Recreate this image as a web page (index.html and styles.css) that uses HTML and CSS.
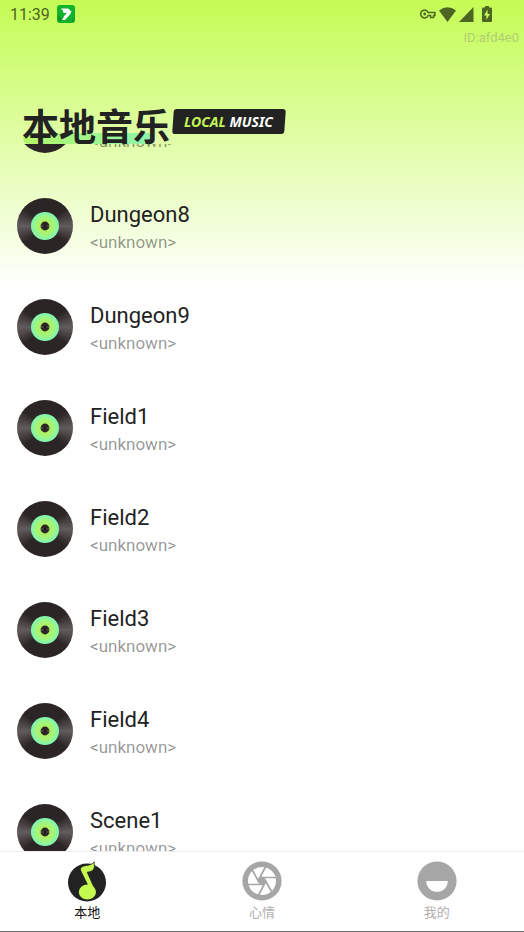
FILE: index.html
```html
<!DOCTYPE html>
<html lang="zh-CN">
    <head>
        <meta charset="UTF-8" />
        <meta name="viewport" content="width=device-width, initial-scale=1.0" />
        <title>本地音乐</title>
        <link rel="stylesheet" href="styles.css">
    </head>
    <body>
        <!-- shared shapes -->
        <svg class="defs" width="0" height="0" aria-hidden="true">
            <defs>
                <radialGradient id="label-fill">
                    <stop offset="0.2" stop-color="#b5f052" />
                    <stop offset="0.65" stop-color="#a2f57e" />
                    <stop offset="1" stop-color="#7df5b4" />
                </radialGradient>
                <symbol id="hole" viewBox="0 0 10 10">
                    <circle cx="5" cy="5" r="4.4" fill="#2c2526" />
                    <path d="M5 5 0.9 4V6ZM5 5 9.1 4V6Z" fill="#5a5253" />
                    <circle cx="5" cy="5" r="1" fill="#1d1718" />
                </symbol>
            </defs>
        </svg>

        <div class="status-bar">
            <span class="time">11:39</span>
            <svg class="app-icon" width="18" height="18" viewBox="0 0 18 18" aria-hidden="true">
                <rect width="18" height="18" rx="3" fill="#12b32c" />
                <path d="M1 10 5 14 3 17H15L17 12V16Q17 17 15 17H3Q1 17 1 15Z" fill="#0c9424" />
                <path d="M4 3.5H11L14.5 6.5 13 9.5 8 15H5L7.5 10.5 10 8H6.5L6 6Z" fill="#fff" />
            </svg>
            <div class="status-icons">
                <svg width="16" height="10" viewBox="0 0 16 10" aria-hidden="true">
                    <path d="M8.2 3.5A3.9 3.9 0 1 0 8.2 6.5H10.6V8.6H13.6V6.5H14.9V3.5Z" fill="none" stroke="#4c6522" stroke-width="1.5" />
                    <circle cx="4.7" cy="5" r="1.4" fill="#4c6522" />
                </svg>
                <svg width="17" height="15" viewBox="0 0 17 15" aria-hidden="true">
                    <path d="M0 3.5Q8.5-2.8 17 3.5L8.5 15Z" fill="#4c6522" />
                </svg>
                <svg width="15" height="15" viewBox="0 0 15 15" aria-hidden="true">
                    <path d="M14.5 0V15H0Z" fill="#4c6522" />
                </svg>
                <svg class="battery" width="10" height="16" viewBox="0 0 10 16" aria-hidden="true">
                    <path fill-rule="evenodd" d="M3 0H7V1.6H9Q10 1.6 10 2.6V15Q10 16 9 16H1Q0 16 0 15V2.6Q0 1.6 1 1.6H3ZM5.6 3.6 2 9.4H4.4V13.8L8 8H5.6Z" fill="#4c6522" />
                </svg>
            </div>
        </div>

        <header>
            <div class="device-id">ID:afd4e0</div>
            <div class="heading">
                <h1>本地音乐</h1>
                <div class="badge"><span>LOCAL</span> MUSIC</div>
            </div>
        </header>

        <main id="songs">
            <ul class="song-list" id="songList"></ul>
        </main>

        <nav>
            <a href="#local" class="active">
                <svg width="40" height="42" viewBox="0 0 40 42" aria-hidden="true">
                    <circle cx="20" cy="22.5" r="19" fill="#222" />
                    <path d="M25.2 3.8 27.2 1.8 27.4 7.3Q26.8 11.3 22.6 11.8L20.2 12.2 28.6 31 23.6 31 13.4 10.1Q12.4 7.1 17 5.9Q23.4 5 25.2 3.8Z" fill="#c5fb50" stroke="#222" stroke-width="0.8" />
                    <ellipse cx="20.4" cy="32" rx="8.6" ry="7.6" fill="#c5fb50" />
                </svg>
                <span>本地</span>
            </a>
            <a href="#mood">
                <svg width="40" height="42" viewBox="0 0 40 42" aria-hidden="true">
                    <circle cx="20" cy="21" r="19.6" fill="#a6a6a6" />
                    <circle cx="20" cy="21" r="14" fill="#fff" />
                    <path d="M10.5 10.5 17.5 23M24 6 16 21M34 17.5H18M29.5 31.5 22.5 19M16 36 24 21M6 24.5H22" fill="none" stroke="#a6a6a6" stroke-width="1.7" />
                    <path d="M18 17.5H22L24 21 22 24.5H18L16 21Z" fill="#a6a6a6" />
                </svg>
                <span>心情</span>
            </a>
            <a href="#mine">
                <svg width="40" height="42" viewBox="0 0 40 42" aria-hidden="true">
                    <circle cx="20" cy="21" r="19.6" fill="#a6a6a6" />
                    <path d="M9.2 21H30.8A10.8 10.8 0 0 1 9.2 21Z" fill="#fff" />
                </svg>
                <span>我的</span>
            </a>
        </nav>

        <script>
            const songs = [
                "Dungeon7",
                "Dungeon8",
                "Dungeon9",
                "Field1",
                "Field2",
                "Field3",
                "Field4",
                "Scene1",
            ];

            const songList = document.getElementById("songList");
            songs.forEach((name) => {
                const song = document.createElement("li");
                song.innerHTML = `
                    <div class="disc">
                        <svg width="28" height="28" viewBox="0 0 28 28" aria-hidden="true">
                            <circle cx="14" cy="14" r="14" fill="url(#label-fill)" />
                            <use href="#hole" x="9" y="9" width="10" height="10" />
                        </svg>
                    </div>
                    <div class="info">
                        <div class="name">${name}</div>
                        <div class="artist">&lt;unknown&gt;</div>
                    </div>`;
                songList.appendChild(song);
            });

            document.getElementById("songs").scrollTop = 70;
        </script>
    </body>
</html>
```

FILE: styles.css
```css
* {
    box-sizing: border-box;
}

body,
html {
    margin: 0;
    padding: 0;
    height: 100%;
    overflow: hidden;
    font-family: Roboto, "Noto Sans CJK SC", sans-serif;
}

body {
    display: flex;
    flex-direction: column;
    background: linear-gradient(to bottom, #c4fc54, #ffffff 288px) #ffffff;
    color: #222222;
    border-bottom: 1px solid #707070;
}

.defs {
    position: absolute;
}

.status-bar {
    display: flex;
    align-items: center;
    height: 28px;
    padding: 0 32px 0 10px;
    color: #4c6522;
}

.time {
    font-size: 16px;
    line-height: 28px;
    padding-top: 2px;
}

.app-icon {
    margin-left: 7px;
}

.status-icons {
    display: flex;
    align-items: center;
    gap: 3px;
    margin-left: auto;
}

.battery {
    margin-left: 5px;
}

header {
    height: 116px;
}

.device-id {
    padding: 2px 5px 0 0;
    font-size: 13px;
    line-height: 16px;
    text-align: right;
    color: #b0ce70;
}

.heading {
    display: flex;
    align-items: flex-start;
    gap: 3px;
    padding: 57px 22px 0;
    position: relative;
    z-index: 1;
}

h1 {
    margin: 0;
    font-family: "Noto Sans CJK SC", sans-serif;
    font-size: 37px;
    line-height: 44px;
    font-weight: 700;
    position: relative;
}

h1::before {
    content: "";
    position: absolute;
    z-index: -1;
    left: 1px;
    right: 16px;
    bottom: 3px;
    height: 11px;
    border-radius: 6px;
    background: linear-gradient(to right, #b5f868, #8af5ac);
}

.badge {
    position: relative;
    margin-top: 6px;
    padding: 0 12px 0 11px;
    font-family: "Noto Sans", sans-serif;
    font-size: 14px;
    line-height: 25px;
    font-weight: 700;
    font-style: italic;
    color: #ffffff;
}

.badge::before {
    content: "";
    position: absolute;
    z-index: -1;
    inset: 0;
    border-radius: 3px;
    background: #222222;
    transform: skewX(-4deg);
}

.badge span {
    color: #c4f557;
}

main {
    flex: 1;
    min-height: 0;
    overflow-y: auto;
    scrollbar-width: none;
}

.song-list {
    margin: 0;
    padding: 0;
    list-style: none;
}

.song-list li {
    display: flex;
    align-items: center;
    gap: 17px;
    height: 101px;
    padding: 0 17px;
}

.disc {
    display: flex;
    align-items: center;
    justify-content: center;
    width: 56px;
    height: 56px;
    border-radius: 50%;
    background: conic-gradient(
        #2c2526 0deg 50deg,
        #625c5d 90deg,
        #2c2526 130deg 230deg,
        #625c5d 270deg,
        #2c2526 310deg
    );
}

.info {
    padding-top: 3px;
}

.name {
    font-size: 22px;
    line-height: 30px;
}

.artist {
    font-size: 17px;
    line-height: 24px;
    color: rgba(0, 0, 0, 0.42);
}

nav {
    display: flex;
    height: 80px;
    background: #ffffff;
    border-top: 1px solid #eeeeee;
}

nav a {
    flex: 1;
    display: flex;
    flex-direction: column;
    align-items: center;
    padding-top: 8px;
    font-size: 13px;
    line-height: 22px;
    color: #b0b0b0;
    text-decoration: none;
}

nav a.active {
    color: #111111;
}
```
